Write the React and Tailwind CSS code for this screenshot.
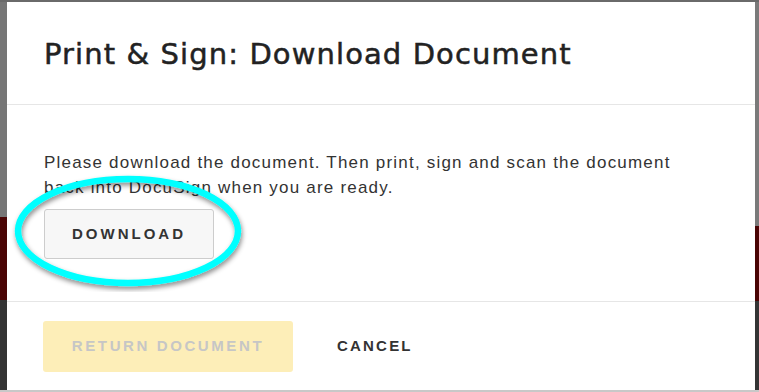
import React from "react";

const Highlight = () => (
  <svg
    className="absolute left-[8px] top-[168px] pointer-events-none"
    width="240"
    height="124"
    viewBox="0 0 240 124"
  >
    <defs>
      <filter id="sh" x="-10%" y="-10%" width="120%" height="130%">
        <feDropShadow dx="1" dy="3" stdDeviation="2.5" floodColor="#000" floodOpacity="0.45" />
      </filter>
    </defs>
    <ellipse cx="120" cy="63" rx="110" ry="52" fill="none" stroke="#0ff" strokeWidth="6.5" filter="url(#sh)" />
  </svg>
);

export default function App() {
  return (
    <div className="relative w-[759px] h-[392px] overflow-hidden bg-[#777] flex flex-col">
      <div className="h-[2px] bg-[#6a6a6a] shrink-0" />
      <div className="flex flex-1">
        {/* left backdrop strip */}
        <div className="w-[7px] flex flex-col shrink-0">
          <div className="h-[215px] bg-[#767676]" />
          <div className="h-[83px] bg-[#4a0404]" />
          <div className="flex-1 bg-[#343434]" />
        </div>

        {/* modal */}
        <div className="w-[748px] h-[388px] bg-white flex flex-col shrink-0" style={{ fontFamily: "'Liberation Sans', Arial, sans-serif" }}>
          <div className="h-[103px] border-b border-[#e6e6e6] flex items-center pl-[37px] pt-[3px]">
            <h1
              className="text-[29px] tracking-[1.1px] text-[#222] [-webkit-text-stroke:0.5px_#222]"
              style={{ fontFamily: "'DejaVu Sans', sans-serif" }}
            >
              Print &amp; Sign: Download Document
            </h1>
          </div>

          <div className="h-[197px] border-b border-[#e6e6e6] pl-[37px] pt-[45px]">
            <p className="text-[17px] leading-[25px] tracking-[1.2px] text-[#333] w-[655px]">
              Please download the document. Then print, sign and scan the document back into DocuSign when you are ready.
            </p>
            <button className="mt-[9px] w-[170px] h-[50px] bg-[#f7f7f7] border border-[#cdcdcd] rounded-[3px] text-[15px] font-bold tracking-[3px] text-[#333]">
              DOWNLOAD
            </button>
          </div>

          <div className="flex-1 flex items-start pl-[36px] pt-[19px] gap-[44px]">
            <button className="w-[250px] h-[51px] bg-[#fdeeb8] rounded-[3px] text-[15px] font-bold tracking-[2.6px] text-[#c6c6c6]">
              RETURN DOCUMENT
            </button>
            <button className="h-[51px] text-[15px] font-bold tracking-[2.2px] text-[#333]">CANCEL</button>
          </div>
        </div>

        {/* right backdrop strip */}
        <div className="flex-1 flex flex-col">
          <div className="h-[224px] bg-[#7a7a7a]" />
          <div className="h-[75px] bg-[#4a0404]" />
          <div className="flex-1 bg-[#343434]" />
        </div>
      </div>
      <div className="absolute left-0 bottom-0 w-full h-[2px] bg-[#c8c8c8]" />
      <Highlight />
    </div>
  );
}
